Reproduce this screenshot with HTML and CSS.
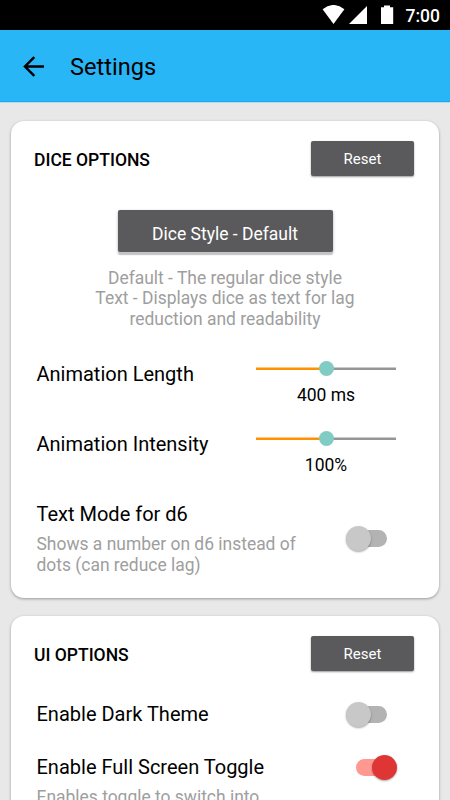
FILE: index.html
```html
<!DOCTYPE html>
<html lang="en">
<head>
    <meta charset="UTF-8">
    <meta name="viewport" content="width=device-width, initial-scale=1.0">
    <title>Settings</title>
    <link rel="stylesheet" href="styles.css">
</head>
<body>
    <div class="status">
        <svg class="status-icons" width="72" height="20" viewBox="0 0 72 20">
            <path d="M0.6 4.2 Q11.5 -4.3 22.4 4.2 L11.5 19 Z"/>
            <path d="M27 19 L45 1 V19 Z"/>
            <path d="M59 2.2 h3 v-1.7 h6 v1.7 h3.2 V19 H59 Z"/>
        </svg>
        <span class="time">7:00</span>
    </div>
    <header class="toolbar">
        <svg class="back" width="22" height="22" viewBox="0 0 22 22">
            <path d="M21 10.5 H2 M11.3 1.2 L1.9 10.5 L11.3 19.8"/>
        </svg>
        <h1>Settings</h1>
    </header>
    <main>
        <section class="card dice">
            <div class="card-head">
                <h2>DICE OPTIONS</h2>
                <button class="btn reset">Reset</button>
            </div>
            <button class="btn style-btn">Dice Style - Default</button>
            <p class="hint center">Default - The regular dice style<br>Text - Displays dice as text for lag<br>reduction and readability</p>
            <div class="row slider-row">
                <span class="label">Animation Length</span>
                <div class="slider">
                    <div class="track"><i class="thumb"></i></div>
                    <span class="value">400 ms</span>
                </div>
            </div>
            <div class="row slider-row">
                <span class="label">Animation Intensity</span>
                <div class="slider">
                    <div class="track"><i class="thumb"></i></div>
                    <span class="value">100%</span>
                </div>
            </div>
            <div class="row text-mode">
                <div>
                    <span class="label">Text Mode for d6</span>
                    <p class="hint">Shows a number on d6 instead of<br>dots (can reduce lag)</p>
                </div>
                <div class="switch"><i></i></div>
            </div>
        </section>
        <section class="card ui">
            <div class="card-head">
                <h2>UI OPTIONS</h2>
                <button class="btn reset">Reset</button>
            </div>
            <div class="row dark">
                <span class="label">Enable Dark Theme</span>
                <div class="switch"><i></i></div>
            </div>
            <div class="row full">
                <div>
                    <span class="label">Enable Full Screen Toggle</span>
                    <p class="hint">Enables toggle to switch into</p>
                </div>
                <div class="switch on"><i></i></div>
            </div>
        </section>
    </main>
</body>
</html>
```
FILE: styles.css
```css
*{
    box-sizing: border-box;
}
body{
    margin: 0;
    height: 800px;
    overflow: hidden;
    background: #e8e8e8;
    color: #000;
    font-family: Roboto, sans-serif;
}
h1, h2, p{
    margin: 0;
}
/* status bar */
.status{
    height: 30px;
    background: #000;
    color: #fff;
    display: flex;
    justify-content: flex-end;
    padding: 5px 10px 0 0;
}
.status-icons{
    fill: #fff;
    margin-right: 12px;
}
.time{
    font-size: 17.5px;
    line-height: 22px;
    font-weight: 500;
}
/* toolbar */
.toolbar{
    height: 72px;
    background: #29b6f6;
    border-bottom: 1px solid #16a9ee;
    box-shadow: 0 1px 0 #b5dcef;
    display: flex;
    align-items: center;
    padding: 2px 0 0 23px;
}
.back{
    fill: none;
    stroke: #000;
    stroke-width: 2.4;
}
.toolbar h1{
    margin-left: 25px;
    padding-top: 1px;
    font-size: 23.6px;
    font-weight: 400;
}
main{
    padding: 19px 11px 0;
}
/* cards */
.card{
    background: #fff;
    border-radius: 13px;
    padding: 20px 25px 0 23px;
    box-shadow: 0 1px 3px rgba(0,0,0,.35);
    margin-bottom: 18.5px;
}
.dice{
    height: 476.5px;
}
.ui{
    height: 300px;
}
.card-head{
    display: flex;
    justify-content: space-between;
    align-items: center;
}
.card-head h2{
    font-size: 17.5px;
    font-weight: 500;
    padding-top: 2px;
}
.btn{
    display: block;
    border: 0;
    border-radius: 2px;
    background: #5a5a5c;
    color: #fff;
    font-family: inherit;
    box-shadow: 0 1px 2px rgba(0,0,0,.4);
}
.reset{
    width: 103px;
    height: 35px;
    font-size: 15px;
    padding-top: 2px;
}
.style-btn{
    width: 215px;
    height: 42px;
    margin: 34px 81.5px 0 83.5px;
    padding-top: 6px;
    font-size: 17.5px;
    box-shadow: 0 3px 1px #c4c4c4, 0 1px 3px rgba(0,0,0,.3);
}
/* text */
.label{
    display: block;
    font-size: 20px;
    line-height: 24px;
}
.hint{
    color: #9e9e9e;
    font-size: 17.45px;
    line-height: 20.6px;
}
.center{
    text-align: center;
    padding: 15.5px 0 0 2px;
    height: 98px;
}
.row{
    display: flex;
    justify-content: space-between;
    padding-left: 2.5px;
}
/* sliders */
.slider-row{
    height: 70px;
    padding-top: 12px;
}
.slider{
    width: 140px;
    margin-right: 18px;
    padding-top: 5px;
    text-align: center;
}
.track{
    height: 3px;
    display: flex;
    align-items: center;
    justify-content: center;
    background: linear-gradient(rgba(255,255,255,.5) 1px, transparent 1px),
        linear-gradient(to right, #ff9100 50%, #959595 50%);
}
.thumb{
    flex: none;
    width: 15px;
    height: 15px;
    border-radius: 50%;
    background: #80cbc4;
}
.value{
    display: block;
    font-size: 17.5px;
    line-height: 22px;
    margin-top: 14px;
}
/* switches */
.text-mode{
    padding-top: 12px;
}
.text-mode .hint{
    margin-top: 8px;
}
.switch{
    width: 40px;
    height: 17px;
    margin-right: 27px;
    border-radius: 9px;
    background: #b3b3b3;
    display: flex;
    align-items: center;
}
.switch i{
    flex: none;
    width: 25px;
    height: 25px;
    margin-left: -1px;
    border-radius: 50%;
    background: #c8c8c8;
    box-shadow: 0 1px 2px rgba(0,0,0,.35);
}
.switch.on{
    margin-right: 18px;
    background: #ff9890;
    justify-content: flex-end;
}
.switch.on i{
    background: #e03535;
    margin-right: -.5px;
}
.text-mode .switch{
    margin-top: 28px;
}
.dark{
    padding-top: 31px;
}
.dark .switch{
    margin-top: 4px;
}
.full{
    padding-top: 29px;
}
.full .hint{
    margin-top: 8px;
}
.full .switch{
    margin-top: 3.5px;
}
```
